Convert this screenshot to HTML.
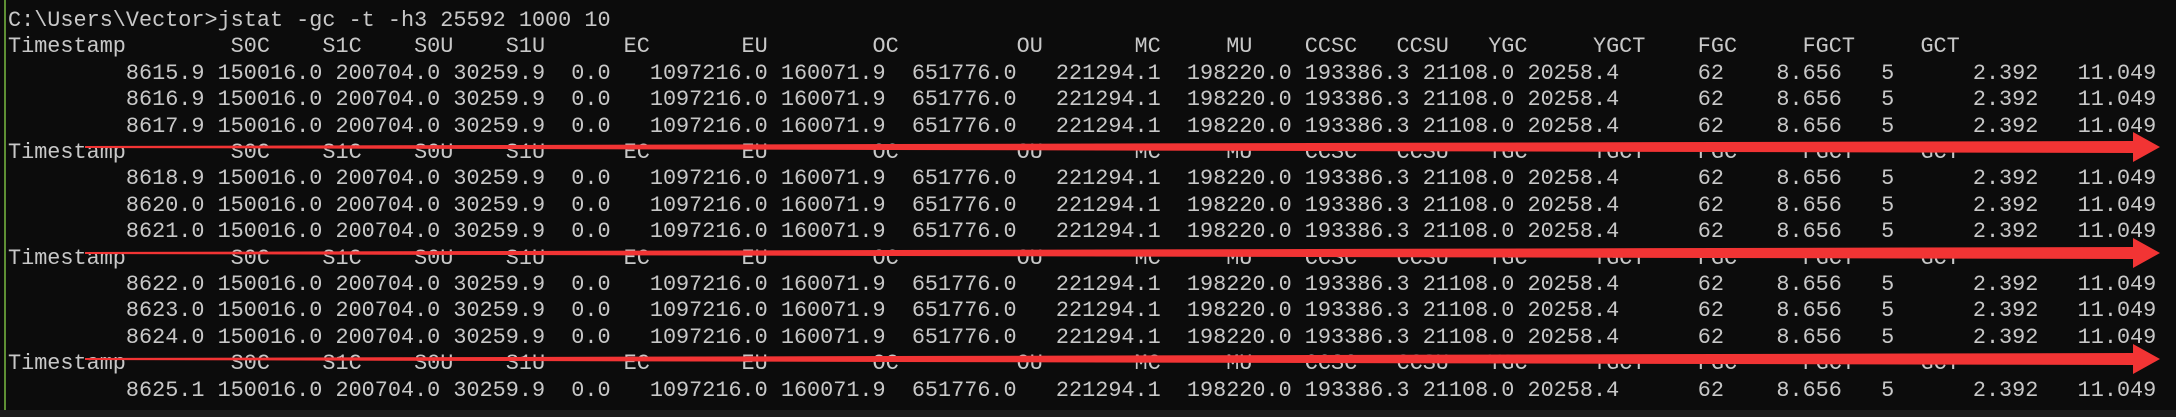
<!DOCTYPE html>
<html><head><meta charset="utf-8"><style>
html,body{margin:0;padding:0;width:2176px;height:417px;overflow:hidden;background:#0c0c0c;}
pre{position:absolute;left:8px;top:8px;margin:0;font-family:"Liberation Mono",monospace;font-size:21.83px;line-height:26.4px;color:#c8c8c8;white-space:pre;}
#g{position:absolute;left:4px;top:0;width:2px;height:410px;background:#5e8f34;}
#b{position:absolute;left:0;top:410px;width:2176px;height:7px;background:#1c1c1c;}
svg{position:absolute;left:0;top:0;}
</style></head><body>
<div id="g"></div>
<pre>C:\Users\Vector&gt;jstat -gc -t -h3 25592 1000 10
Timestamp        S0C    S1C    S0U    S1U      EC       EU        OC         OU       MC     MU    CCSC   CCSU   YGC     YGCT    FGC     FGCT     GCT
         8615.9 150016.0 200704.0 30259.9  0.0   1097216.0 160071.9  651776.0   221294.1  198220.0 193386.3 21108.0 20258.4      62    8.656   5      2.392   11.049
         8616.9 150016.0 200704.0 30259.9  0.0   1097216.0 160071.9  651776.0   221294.1  198220.0 193386.3 21108.0 20258.4      62    8.656   5      2.392   11.049
         8617.9 150016.0 200704.0 30259.9  0.0   1097216.0 160071.9  651776.0   221294.1  198220.0 193386.3 21108.0 20258.4      62    8.656   5      2.392   11.049
Timestamp        S0C    S1C    S0U    S1U      EC       EU        OC         OU       MC     MU    CCSC   CCSU   YGC     YGCT    FGC     FGCT     GCT
         8618.9 150016.0 200704.0 30259.9  0.0   1097216.0 160071.9  651776.0   221294.1  198220.0 193386.3 21108.0 20258.4      62    8.656   5      2.392   11.049
         8620.0 150016.0 200704.0 30259.9  0.0   1097216.0 160071.9  651776.0   221294.1  198220.0 193386.3 21108.0 20258.4      62    8.656   5      2.392   11.049
         8621.0 150016.0 200704.0 30259.9  0.0   1097216.0 160071.9  651776.0   221294.1  198220.0 193386.3 21108.0 20258.4      62    8.656   5      2.392   11.049
Timestamp        S0C    S1C    S0U    S1U      EC       EU        OC         OU       MC     MU    CCSC   CCSU   YGC     YGCT    FGC     FGCT     GCT
         8622.0 150016.0 200704.0 30259.9  0.0   1097216.0 160071.9  651776.0   221294.1  198220.0 193386.3 21108.0 20258.4      62    8.656   5      2.392   11.049
         8623.0 150016.0 200704.0 30259.9  0.0   1097216.0 160071.9  651776.0   221294.1  198220.0 193386.3 21108.0 20258.4      62    8.656   5      2.392   11.049
         8624.0 150016.0 200704.0 30259.9  0.0   1097216.0 160071.9  651776.0   221294.1  198220.0 193386.3 21108.0 20258.4      62    8.656   5      2.392   11.049
Timestamp        S0C    S1C    S0U    S1U      EC       EU        OC         OU       MC     MU    CCSC   CCSU   YGC     YGCT    FGC     FGCT     GCT
         8625.1 150016.0 200704.0 30259.9  0.0   1097216.0 160071.9  651776.0   221294.1  198220.0 193386.3 21108.0 20258.4      62    8.656   5      2.392   11.049</pre>
<svg width="2176" height="417" viewBox="0 0 2176 417">
<g fill="#f23434">
<polygon points="85,146 2133,141 2133,132 2160,147 2133,162 2133,153 85,148"/>
<polygon points="85,252 2133,247 2133,238 2160,253 2133,268 2133,259 85,254"/>
<polygon points="85,358 2133,353 2133,344 2160,359 2133,374 2133,365 85,360"/>
</g>
</svg>
<div id="b"></div>
</body></html>
